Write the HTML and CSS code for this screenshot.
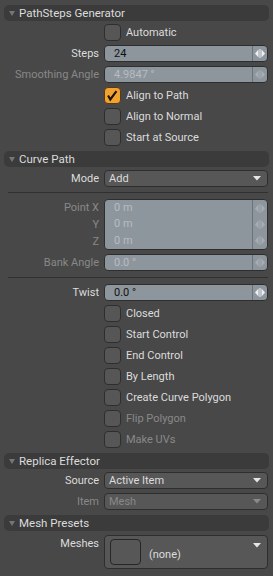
FILE: index.html
```html
<!DOCTYPE html>
<html lang="en">
<head>
<meta charset="UTF-8">
<meta name="viewport" content="width=device-width, initial-scale=1.0">
<title>PathSteps Generator</title>
<link rel="stylesheet" href="styles.css">
</head>
<body>

<!-- icones reutilizados -->
<svg class="defs" width="0" height="0">
  <symbol id="spin" viewBox="0 0 10 9">
    <path d="M3.5 0.5 L0 4.5 L3.5 8.5 Z M6.5 0.5 L10 4.5 L6.5 8.5 Z" fill="currentColor"/>
    <rect x="4.5" y="0" width="1" height="9" fill="currentColor"/>
  </symbol>
  <symbol id="drop" viewBox="0 0 8 5">
    <path d="M0 0 L8 0 L4 4.5 Z" fill="currentColor"/>
  </symbol>
</svg>

<div class="panel">

  <div class="section-head"><span class="tri"></span>PathSteps Generator</div>

  <div class="row">
    <span class="label"></span>
    <div class="check"><span class="box"></span>Automatic</div>
  </div>

  <div class="row">
    <span class="label">Steps</span>
    <div class="field"><span class="value">24</span><span class="spin"><svg><use href="#spin"/></svg></span></div>
  </div>

  <div class="row off">
    <span class="label">Smoothing Angle</span>
    <div class="field"><span class="value">4.9847 °</span><span class="spin"><svg><use href="#spin"/></svg></span></div>
  </div>

  <div class="row">
    <span class="label"></span>
    <div class="check"><span class="box on"><svg viewBox="0 0 17 17"><path d="M3.5 8.5 L6 13 L13 3.5" fill="none" stroke="#1b1408" stroke-width="2.4"/></svg></span>Align to Path</div>
  </div>

  <div class="row">
    <span class="label"></span>
    <div class="check"><span class="box"></span>Align to Normal</div>
  </div>

  <div class="row">
    <span class="label"></span>
    <div class="check"><span class="box"></span>Start at Source</div>
  </div>

  <div class="section-head second"><span class="tri"></span>Curve Path</div>

  <div class="row">
    <span class="label">Mode</span>
    <div class="select"><span class="value">Add</span><svg class="arrow"><use href="#drop"/></svg></div>
  </div>

  <div class="divider"></div>

  <div class="row group off">
    <div class="labels"><span>Point X</span><span>Y</span><span>Z</span></div>
    <div class="field multi">
      <div class="sub"><span class="value">0 m</span><span class="spin"><svg><use href="#spin"/></svg></span></div>
      <div class="sub"><span class="value">0 m</span><span class="spin"><svg><use href="#spin"/></svg></span></div>
      <div class="sub"><span class="value">0 m</span><span class="spin"><svg><use href="#spin"/></svg></span></div>
    </div>
  </div>

  <div class="row off bank">
    <span class="label">Bank Angle</span>
    <div class="field"><span class="value">0.0 °</span><span class="spin"><svg><use href="#spin"/></svg></span></div>
  </div>

  <div class="divider low"></div>

  <div class="row">
    <span class="label">Twist</span>
    <div class="field"><span class="value">0.0 °</span><span class="spin"><svg><use href="#spin"/></svg></span></div>
  </div>

  <div class="row"><span class="label"></span><div class="check"><span class="box"></span>Closed</div></div>
  <div class="row"><span class="label"></span><div class="check"><span class="box"></span>Start Control</div></div>
  <div class="row"><span class="label"></span><div class="check"><span class="box"></span>End Control</div></div>
  <div class="row"><span class="label"></span><div class="check"><span class="box"></span>By Length</div></div>
  <div class="row"><span class="label"></span><div class="check"><span class="box"></span>Create Curve Polygon</div></div>
  <div class="row off"><span class="label"></span><div class="check"><span class="box"></span>Flip Polygon</div></div>
  <div class="row off"><span class="label"></span><div class="check"><span class="box"></span>Make UVs</div></div>

  <div class="section-head"><span class="tri"></span>Replica Effector</div>

  <div class="row">
    <span class="label">Source</span>
    <div class="select"><span class="value">Active Item</span><svg class="arrow"><use href="#drop"/></svg></div>
  </div>

  <div class="row off">
    <span class="label">Item</span>
    <div class="select"><span class="value">Mesh</span><svg class="arrow"><use href="#drop"/></svg></div>
  </div>

  <div class="section-head"><span class="tri"></span>Mesh Presets</div>

  <div class="row meshes">
    <span class="label">Meshes</span>
    <div class="select big">
      <span class="thumb"></span>
      <span class="value">(none)</span>
      <svg class="arrow"><use href="#drop"/></svg>
    </div>
  </div>

</div>

</body>
</html>
```

FILE: styles.css
```css
:root {
  --fundo: #484848;
  --cabecalho: #3b3b3b;
  --texto: #dcdcdc;
  --texto-off: #888888;
  --borda: #2e2e2e;
  --caixa: #565656;
  --campo: #8e969d;
  --laranja: #f2a230;
}

body {
  margin: 0;
  background: var(--fundo);
  color: var(--texto);
  font-family: Roboto, "Liberation Sans", sans-serif;
  font-size: 11px;
}

.defs {
  position: absolute;
}

.panel {
  width: 273px;
  box-sizing: border-box;
  padding: 5px 4px 0 4px;
}

.section-head {
  height: 16px;
  background: var(--cabecalho);
  border-radius: 5px;
  display: flex;
  align-items: center;
  padding-left: 5px;
  margin-bottom: 1px;
  color: var(--texto);
  font-size: 11.5px;
}

.section-head.second,
.row + .section-head {
  margin-top: 3px;
}

.tri {
  width: 0;
  height: 0;
  border-left: 3px solid transparent;
  border-right: 3px solid transparent;
  border-top: 5px solid #767676;
  margin-right: 4px;
}

.row {
  display: grid;
  grid-template-columns: 95px 164px;
  column-gap: 5px;
  height: 21px;
  align-items: center;
}

.label {
  text-align: right;
  white-space: nowrap;
}

.off .label,
.off .labels {
  color: var(--texto-off);
}

.check {
  display: flex;
  align-items: center;
  white-space: nowrap;
}

.off .check {
  color: var(--texto-off);
}

.box {
  width: 17px;
  height: 17px;
  box-sizing: border-box;
  border: 1px solid var(--borda);
  border-radius: 4px;
  background: var(--caixa);
  margin-right: 5px;
}

.box.on {
  background: var(--laranja);
  border-color: #5a3a10;
}

.box svg {
  display: block;
  width: 15px;
  height: 15px;
}

.field {
  height: 17px;
  box-sizing: border-box;
  border: 1px solid var(--borda);
  border-radius: 4px;
  background: var(--campo);
  display: flex;
  color: #111;
}

.off .field {
  color: #b7bcc1;
}

.value {
  flex: 1;
  padding-left: 9px;
  line-height: 15px;
  white-space: nowrap;
}

.spin {
  width: 14px;
  border-left: 1px solid #6b737a;
  display: flex;
  align-items: center;
  justify-content: center;
  color: #eef1f3;
}

.off .spin {
  color: #a7adb2;
}

.spin svg {
  width: 10px;
  height: 9px;
}

.select {
  height: 17px;
  box-sizing: border-box;
  border: 1px solid var(--borda);
  border-radius: 4px;
  background: #575757;
  display: flex;
  align-items: center;
}

.select .value {
  padding-left: 4px;
}

.off .select {
  color: var(--texto-off);
}

.arrow {
  width: 8px;
  height: 5px;
  margin-right: 6px;
  color: #e6e6e6;
}

.off .arrow {
  color: #8a8a8a;
}

.divider {
  height: 1px;
  background: #303030;
  margin: 3px 1px 6px 4px;
}

.divider.low {
  margin: 4px 1px 4px 4px;
}

.group {
  height: 51px;
  align-items: stretch;
}

.labels {
  display: flex;
  flex-direction: column;
  text-align: right;
}

.labels span {
  height: 17px;
  line-height: 17px;
}

.field.multi {
  height: 51px;
  flex-direction: column;
}

.sub {
  flex: 1;
  display: flex;
}

.sub .value {
  line-height: 16px;
}

.bank {
  margin-top: 2px;
}

.meshes {
  height: 34px;
  margin-top: 4px;
  align-items: stretch;
}

.meshes .label {
  padding-top: 2px;
  line-height: 14px;
}

.select.big {
  height: 34px;
  align-items: flex-start;
  padding: 3px 0 0 5px;
}

.thumb {
  width: 31px;
  height: 26px;
  box-sizing: border-box;
  border: 1px solid #262626;
  border-radius: 4px;
}

.select.big .value {
  padding: 8px 0 0 8px;
}

.select.big .arrow {
  margin-top: 4px;
}
```
